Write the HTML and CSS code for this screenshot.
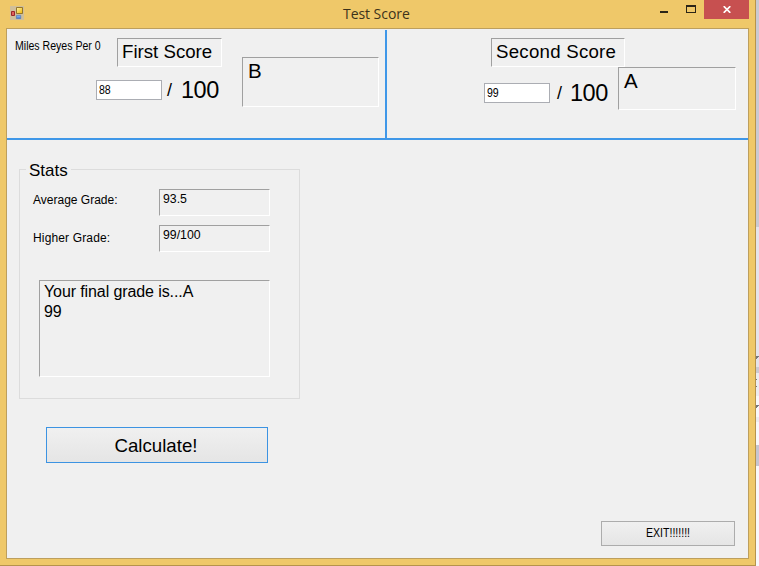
FILE: index.html
```
<!DOCTYPE html>
<html lang="en">
<head>
<meta charset="utf-8">
<title>Test Score</title>
<link rel="stylesheet" href="styles.css">
</head>
<body>
<main class="window">
  <header class="titlebar">
    <svg class="app-icon" width="14" height="14" viewBox="0 0 14 14">
      <defs>
        <linearGradient id="gold" x2="1" y2="1"><stop stop-color="#fff5a8"/><stop offset="1" stop-color="#f0b400"/></linearGradient>
        <linearGradient id="blue" x2="0" y2="1"><stop stop-color="#8fc0f8"/><stop offset="1" stop-color="#3f74cb"/></linearGradient>
      </defs>
      <path fill="#d0bf9a" d="M0 0h14v14H0z"/>
      <path fill="url(#gold)" stroke="#94752a" d="M6.500 1.500h6v6h-6z"/>
      <path fill="#e0605c" stroke="#98282a" d="M1.500 5.500h3v4h-3z"/>
      <path fill="url(#blue)" stroke="#5279b8" stroke-width=".7" d="M6.400 9.400h4.300v3.200H6.400z"/>
    </svg>
    <h1 class="title">Test Score</h1>
    <div class="controls">
      <svg width="53" height="19" viewBox="0 0 53 19" shape-rendering="crispEdges">
        <path fill="#2b2517" d="M9 11h8v2H9z"/>
        <path fill="#2b2517" fill-rule="evenodd" d="M35 5h10v8H35zM36 7v5h8V7z"/>
      </svg>
    </div>
    <div class="close">
      <svg width="8" height="7" viewBox="0 0 8 7"><path d="M.7.2 7.300 6.800M7.300.2.7 6.800" stroke="#fff" stroke-width="1.700"/></svg>
    </div>
  </header>
  <section class="client">
    <div class="scores">
      <div class="pane first">
        <span class="author"><span class="squeeze">Miles Reyes Per 0</span></span>
        <div class="entry">
          <div class="sunken heading">First Score</div>
          <div class="row"><div class="textbox"><span class="squeeze">88</span></div><span class="slash">/</span><span class="total">100</span></div>
        </div>
        <div class="sunken letter">B</div>
      </div>
      <div class="pane second">
        <div class="entry">
          <div class="sunken heading">Second Score</div>
          <div class="row"><div class="textbox"><span class="squeeze">99</span></div><span class="slash">/</span><span class="total">100</span></div>
        </div>
        <div class="sunken letter">A</div>
      </div>
    </div>
    <fieldset class="stats">
      <legend>Stats</legend>
      <div class="stat"><span>Average Grade:</span><div class="sunken value">93.5</div></div>
      <div class="stat"><span>Higher Grade:</span><div class="sunken value">99/100</div></div>
      <div class="sunken final">Your final grade is...A<br>99</div>
    </fieldset>
    <div class="button calculate">Calculate!</div>
    <div class="button exit"><span class="squeeze">EXIT!!!!!!!</span></div>
  </section>
</main>
<aside class="behind">
  <svg width="3" height="566" viewBox="0 0 3 566" shape-rendering="crispEdges">
    <path fill="#c9c9d2" d="M0 0h3v227H0z"/>
    <path fill="#e4e3eb" d="M0 227h3v140H0z"/>
    <path fill="#cbcad3" d="M0 367h3v6H0z"/>
    <path fill="#ececf0" d="M0 373h3v23H0zM0 417h3v5H0z"/>
    <path fill="#c5c5d0" d="M0 445h3v21H0z"/>
    <path fill="#77777c" d="M0 356h3v1H2v1H1v1H0zM0 379h1v1H0zM0 386h1v1H0zM0 405h3v1H2v1H1v1H0z"/>
  </svg>
</aside>
</body>
</html>
```
FILE: styles.css
```
* { box-sizing: border-box; }

body {
  margin: 0;
  width: 759px;
  height: 566px;
  overflow: hidden;
  display: flex;
  background: #f8f8fa;
  font: 12px/14px "Liberation Sans", Arial, sans-serif;
  color: #000;
}

.window {
  width: 756px;
  height: 566px;
  padding: 0 6px 6px;
  background: #efc869;
  border-right: 1px solid #b6934c;
  border-bottom: 1px solid #b6934c;
}

.behind { width: 3px; }
.behind svg { display: block; }

.titlebar {
  height: 28px;
  display: flex;
  align-items: flex-start;
}

.app-icon { margin: 6px 0 0 4px; flex: none; }

.title {
  margin: 4px 0 0;
  padding-left: 319px;
  width: 627px;
  flex: none;
  white-space: nowrap;
  font: 14px/19px "Open Sans", "Noto Sans", sans-serif;
  letter-spacing: -0.05px;
  color: #3c321b;
}

.controls { width: 53px; height: 19px; flex: none; }

.close {
  width: 45px;
  height: 19px;
  flex: none;
  display: flex;
  align-items: center;
  justify-content: center;
  background: #c75050;
}

.client {
  width: 743px;
  height: 531px;
  border: 1px solid #bd9f5d;
  background: #f0f0f0;
  display: flex;
  flex-direction: column;
}

.scores {
  height: 111px;
  flex: none;
  display: flex;
  border-bottom: 2px solid #3f97e8;
  padding-top: 1px;
}

.pane { display: flex; }
.first { width: 380px; border-right: 2px solid #3f97e8; }
.second { width: 361px; padding-left: 97px; }

.author { width: 89px; padding: 9px 0 0 8px; white-space: nowrap; flex: none; }
.squeeze { display: inline-block; transform: scaleX(0.88); transform-origin: 0 50%; }

.entry { width: 146px; flex: none; padding-top: 8px; }
.second .entry { width: 134px; }

.sunken {
  border: 1px solid;
  border-color: #a0a0a0 #fff #fff #a0a0a0;
}

.heading {
  width: 105px;
  height: 29px;
  margin-left: 21px;
  padding: 2px 0 0 4px;
  font-size: 18.67px;
  line-height: 21px;
  white-space: nowrap;
}

.second .heading { width: 134px; margin-left: 7px; letter-spacing: 0.25px; }

.row {
  display: flex;
  height: 20px;
  margin-top: 13px;
}

.second .row { margin-top: 16px; }

.textbox {
  width: 66px;
  height: 20px;
  padding: 2px;
  border: 1px solid #abadb3;
  background: #fff;
}

.slash { width: 19px; padding-left: 5px; font-size: 18px; line-height: 20px; }
.second .slash { width: 20px; padding-left: 7px; }
.total { font-size: 23.5px; line-height: 20px; letter-spacing: -0.5px; }

.letter {
  width: 137px;
  height: 50px;
  margin-top: 27px;
  padding: 1px 0 0 5px;
  font-size: 20.5px;
  line-height: 24px;
}

.second .letter { width: 118px; height: 43px; margin-top: 37px; }

.stats {
  width: 281px;
  height: 238px;
  flex: none;
  margin: 21px 0 0 12px;
  padding: 0 0 0 13px;
  border: 1px solid #dcdcdc;
}

.stats legend {
  height: 16px;
  margin-left: -7px;
  padding: 0 3px;
  font-size: 17px;
  line-height: 20px;
}

.stat { display: flex; height: 27px; margin: 12px 0 9px; }
.stat + .stat { margin-top: 9px; }
.stat span { width: 126px; padding-top: 4px; }
.stat + .stat span { padding-top: 6px; letter-spacing: 0.15px; }
.value { width: 111px; padding: 2px 0 0 3px; font-size: 12.3px; }

.final {
  width: 231px;
  height: 97px;
  margin: 28px 0 0 6px;
  padding: 1px 0 0 4px;
  font-size: 16px;
  line-height: 20px;
  letter-spacing: -0.1px;
}

.button {
  flex: none;
  display: flex;
  align-items: center;
  justify-content: center;
  border: 1px solid #acacac;
  background: linear-gradient(#f0f0f0, #e5e5e5);
}

.calculate {
  width: 222px;
  height: 36px;
  margin: 28px 0 0 39px;
  padding: 1px 2px 0 0;
  border: 1px solid #3c93e2;
  font-size: 18.67px;
  line-height: 22px;
}

.exit { width: 134px; height: 25px; margin: auto 13px 12px auto; padding-bottom: 2px; }
.exit .squeeze { transform-origin: 50% 50%; }
```
